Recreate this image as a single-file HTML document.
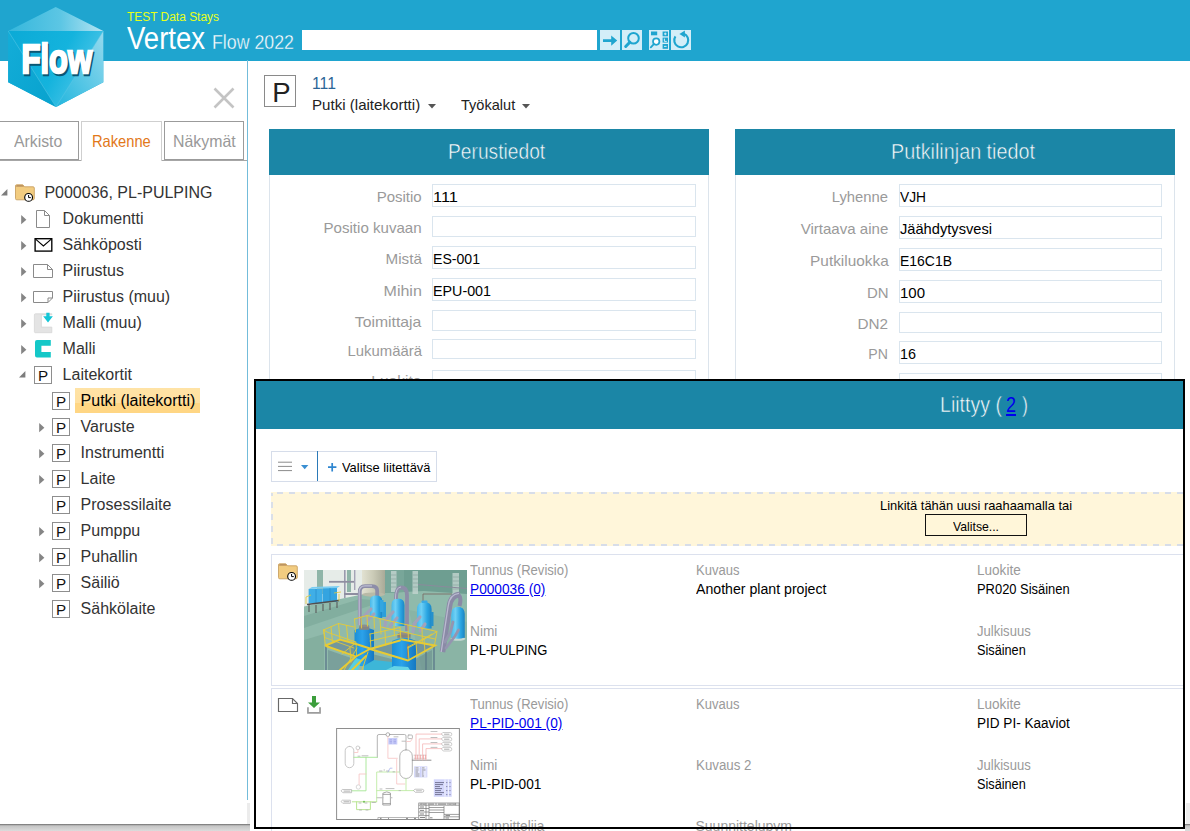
<!DOCTYPE html>
<html lang="fi"><head><meta charset="utf-8"><title>Vertex Flow 2022</title>
<style>
html,body{margin:0;padding:0;background:#fff;}
body{width:1190px;height:831px;position:relative;overflow:hidden;font-family:"Liberation Sans",sans-serif;}
.t{position:absolute;white-space:nowrap;line-height:1;display:inline-block;}
.ic{position:absolute;display:block;overflow:visible;}
.abs{position:absolute;}
#hdr{position:absolute;left:0;top:0;width:1190px;height:61px;background:#1FA5CF;}
.hbtn{position:absolute;top:30px;width:20px;height:20px;background:#D3EEF8;}
.tab{position:absolute;top:121px;height:39px;box-sizing:border-box;border:1px solid #9b9b9b;background:#fff;}
.tab.act{border-color:#cfcfcf;border-bottom:none;height:40px;}
.pbox{position:absolute;width:16px;height:16px;border:1px solid #8e8e8e;background:#fff;}
.sel{position:absolute;background:linear-gradient(#FFE3A6 0,#FFE0A0 58%,#FFD684 62%,#FFD684 100%);}
.phead{position:absolute;top:129px;height:46px;background:#1B86A6;}
.pbody{position:absolute;top:175px;height:300px;box-sizing:border-box;border:1px solid #DCE4EC;border-top:none;background:#fff;}
.inp{position:absolute;border:1px solid #DAE5EE;background:#fff;}
#ov{position:absolute;left:254px;top:379px;width:927px;height:450px;border:2px solid #000;border-bottom:none;background:#fff;overflow:hidden;}
.card{position:absolute;left:15px;width:1400px;border:1px solid #DCE1EE;background:#fff;box-sizing:border-box;}
</style></head><body>
<div id="hdr"></div>
<!-- search -->
<div class="abs" style="left:302px;top:30px;width:295px;height:20px;background:#fff"></div>
<div class="hbtn" style="left:600px"><svg width="20" height="20" viewBox="0 0 20 20"><path d="M3 9.2H11.2V5.4L17.2 10.6L11.2 15.8V12.1H3Z" fill="#1FA5CF"/></svg></div>
<div class="hbtn" style="left:622px"><svg width="20" height="20" viewBox="0 0 20 20"><circle cx="11.5" cy="8.2" r="5.3" fill="none" stroke="#1FA5CF" stroke-width="2"/><path d="M7.8 12.2L3.7 16.5" stroke="#1FA5CF" stroke-width="3" stroke-linecap="round"/></svg></div>
<div class="hbtn" style="left:649px"><svg width="20" height="20" viewBox="0 0 20 20"><rect x="2" y="1.5" width="6.2" height="3.8" fill="#1FA5CF"/><circle cx="7.2" cy="11.6" r="3.2" fill="#fff" stroke="#1FA5CF" stroke-width="1.7"/><path d="M4.8 14.2L1.8 17.4" stroke="#1FA5CF" stroke-width="1.8" stroke-linecap="round"/><rect x="13.6" y="1.5" width="5.4" height="4.8" fill="#1FA5CF"/><rect x="13.6" y="7.6" width="5.4" height="5" fill="#1FA5CF"/><rect x="13.6" y="14" width="5.4" height="4.8" fill="#1FA5CF"/><path d="M15 3.9H17.6M16.3 2.6V5.2M15.4 8.6V11.4H17.8M15 16.4H17.6" stroke="#D3EEF8" stroke-width="1" fill="none"/></svg></div>
<div class="hbtn" style="left:671px"><svg width="20" height="20" viewBox="0 0 20 20"><path d="M4.4 6.4A7 7 0 1 0 12.8 3.7" fill="none" stroke="#1FA5CF" stroke-width="2.1"/><path d="M13.9 0.5L8.4 4L13.9 7.6Z" fill="#1FA5CF"/></svg></div>
<!-- logo -->
<svg class="ic" style="left:0;top:0" width="120" height="115" viewBox="0 0 120 115">
<defs>
<linearGradient id="gt" x1="0" y1="0" x2="1" y2="0"><stop offset="0" stop-color="#35B7DC"/><stop offset="0.55" stop-color="#5CC6E4"/><stop offset="1" stop-color="#B5E4F2"/></linearGradient>
<linearGradient id="gm" x1="0" y1="0" x2="1" y2="0.4"><stop offset="0" stop-color="#0BAAD6"/><stop offset="0.6" stop-color="#14B3DD"/><stop offset="1" stop-color="#4EC6E8"/></linearGradient>
<linearGradient id="gr" x1="0" y1="1" x2="1" y2="0"><stop offset="0" stop-color="#22B6DE"/><stop offset="1" stop-color="#96DAEE"/></linearGradient>
<linearGradient id="gl" x1="0" y1="0" x2="1" y2="1"><stop offset="0" stop-color="#14ADD8"/><stop offset="1" stop-color="#07A2CE"/></linearGradient>
</defs>
<polygon points="55.7,7 103.3,31 103.3,82.3 56,107 8.2,82.3 8.2,31" fill="#19ABD5"/>
<polygon points="55.7,7 103.3,31 8.2,31" fill="url(#gt)"/>
<polygon points="8.2,31 103.3,31 56,107" fill="url(#gm)"/>
<polygon points="8.2,31 56,107 8.2,82.3" fill="url(#gl)"/>
<polygon points="103.3,31 103.3,82.3 56,107" fill="url(#gr)"/>
<path d="M8.2 31L56 107L103.3 31" fill="none" stroke="#6FD0EA" stroke-width="0.5" opacity="0.8"/>
<text x="22.9" y="74.5" font-family="Liberation Sans, sans-serif" font-weight="bold" font-size="41" textLength="70.5" lengthAdjust="spacingAndGlyphs" fill="#0A5673" stroke="#0A5673" stroke-width="2.4" stroke-linejoin="miter">Flow</text>
<text x="21.5" y="73" font-family="Liberation Sans, sans-serif" font-weight="bold" font-size="41" textLength="70.5" lengthAdjust="spacingAndGlyphs" fill="#fff" stroke="#fff" stroke-width="2.4" stroke-linejoin="miter">Flow</text>
</svg>
<!-- left panel -->
<svg class="ic" style="left:213px;top:87px" width="22" height="22" viewBox="0 0 22 22"><path d="M1.5 1.5L20.5 20.5M20.5 1.5L1.5 20.5" stroke="#c4c4c4" stroke-width="2.6"/></svg>
<div class="abs" style="left:0;top:160px;width:247px;height:1px;background:#a6a6a6"></div>
<div class="tab" style="left:-4px;width:83px"></div>
<div class="tab act" style="left:81px;width:81px"></div>
<div class="tab" style="left:164px;width:80px"></div>
<div class="abs" style="left:247px;top:60px;width:1px;height:740px;background:#73BCDA"></div>
<div class="abs" style="left:247px;top:803px;width:3px;height:21px;background:#ececec"></div>
<div class="abs" style="left:0;top:824px;width:250px;height:7px;background:linear-gradient(#7a7a7a 0,#8a8a8a 12%,#c4c4c4 25%,#dcdcdc 100%)"></div>
<div class="abs" style="left:1186px;top:803px;width:4px;height:21px;background:#ececec"></div>
<div class="abs" style="left:1185px;top:824px;width:5px;height:7px;background:linear-gradient(#7a7a7a 0,#8a8a8a 12%,#c4c4c4 25%,#dcdcdc 100%)"></div>
<svg class="ic" style="left:0.9px;top:189.4px" width="7" height="7" viewBox="0 0 7 7"><path d="M6.4 0V6.4H0Z" fill="#7c7c7c"/></svg>
<svg class="ic" style="left:15px;top:183.5px" width="21" height="18" viewBox="0 0 21 18"><path d="M1.5 0.8H7.8L9.6 2.8H18Q19.3 2.8 19.3 4V14.5Q19.3 15.8 18 15.8H1.8Q0.5 15.8 0.5 14.5V2Q0.5 0.8 1.5 0.8Z" fill="#F2CC80" stroke="#C9A163" stroke-width="0.9"/><path d="M1.6 0.9H7.6L9.2 2.7H1Z" fill="#BE9560"/><circle cx="13.6" cy="13.4" r="3.9" fill="#fff" stroke="#000" stroke-width="1.1"/><path d="M13.6 11V13.6H15.8" fill="none" stroke="#000" stroke-width="1"/></svg>
<svg class="ic" style="left:21px;top:215.0px" width="6" height="10" viewBox="0 0 6 10"><path d="M0.2 0.1L5.4 4.7L0.2 9.3Z" fill="#858585"/></svg>
<svg class="ic" style="left:35px;top:209px" width="16" height="20" viewBox="0 0 16 20"><path d="M1.5 1.5H9.5L14.5 6.5V18.5H1.5Z" fill="#fff" stroke="#8a8a8a"/><path d="M9.5 1.5V6.5H14.5" fill="none" stroke="#8a8a8a"/></svg>
<svg class="ic" style="left:21px;top:241.0px" width="6" height="10" viewBox="0 0 6 10"><path d="M0.2 0.1L5.4 4.7L0.2 9.3Z" fill="#858585"/></svg>
<svg class="ic" style="left:33.5px;top:237.3px" width="20" height="16" viewBox="0 0 20 16"><rect x="1.1" y="1.7" width="16.7" height="12.4" fill="#fff" stroke="#000" stroke-width="1.35"/><path d="M1.6 2.2L9.4 9L17.3 2.2" fill="none" stroke="#000" stroke-width="1.1"/></svg>
<svg class="ic" style="left:21px;top:267.0px" width="6" height="10" viewBox="0 0 6 10"><path d="M0.2 0.1L5.4 4.7L0.2 9.3Z" fill="#858585"/></svg>
<svg class="ic" style="left:32px;top:263px" width="22" height="16" viewBox="0 0 22 16"><path d="M1.5 1.5H15.5L20.5 6.5V14.5H1.5Z" fill="#fff" stroke="#8a8a8a"/><path d="M15.5 1.5V6.5H20.5" fill="none" stroke="#8a8a8a"/></svg>
<svg class="ic" style="left:21px;top:293.0px" width="6" height="10" viewBox="0 0 6 10"><path d="M0.2 0.1L5.4 4.7L0.2 9.3Z" fill="#858585"/></svg>
<svg class="ic" style="left:32px;top:289.4px" width="22" height="16" viewBox="0 0 22 16"><path d="M1.5 2.5H20.5V9L16 13.5H1.5Z" fill="#fff" stroke="#8a8a8a"/><path d="M20.5 9H16V13.5" fill="none" stroke="#8a8a8a"/></svg>
<svg class="ic" style="left:21px;top:319.0px" width="6" height="10" viewBox="0 0 6 10"><path d="M0.2 0.1L5.4 4.7L0.2 9.3Z" fill="#858585"/></svg>
<svg class="ic" style="left:33px;top:309.5px" width="22" height="24" viewBox="0 0 22 24"><path d="M2.4 3.8H18.8V4.8H8.4V17.1H18.8V22.7H2.4Q1.4 22.7 1.4 21.7V4.8Q1.4 3.8 2.4 3.8Z" fill="#e4e4e4" stroke="#d6d6d6" stroke-width="0.8"/><path d="M13.3 2.8H16.6V6.3H19.9L15 12.5L10.2 6.3H13.3Z" fill="#14C6D6"/></svg>
<svg class="ic" style="left:21px;top:345.0px" width="6" height="10" viewBox="0 0 6 10"><path d="M0.2 0.1L5.4 4.7L0.2 9.3Z" fill="#858585"/></svg>
<svg class="ic" style="left:33px;top:339.3px" width="20" height="20" viewBox="0 0 20 20"><path d="M4 1H17.8V6.8H8.4V13H17.8V18.6H4Q2 18.6 2 16.6V3Q2 1 4 1Z" fill="#14C8C8"/></svg>
<svg class="ic" style="left:18.900000000000002px;top:371.4px" width="7" height="7" viewBox="0 0 7 7"><path d="M6.4 0V6.4H0Z" fill="#7c7c7c"/></svg>
<div class="pbox" style="left:34px;top:366.4px"></div>
<div class="sel" style="left:75px;top:388px;width:125px;height:24.5px"></div>
<div class="pbox" style="left:52px;top:392.4px"></div>
<svg class="ic" style="left:39px;top:423.0px" width="6" height="10" viewBox="0 0 6 10"><path d="M0.2 0.1L5.4 4.7L0.2 9.3Z" fill="#858585"/></svg>
<div class="pbox" style="left:52px;top:418.4px"></div>
<svg class="ic" style="left:39px;top:449.0px" width="6" height="10" viewBox="0 0 6 10"><path d="M0.2 0.1L5.4 4.7L0.2 9.3Z" fill="#858585"/></svg>
<div class="pbox" style="left:52px;top:444.4px"></div>
<svg class="ic" style="left:39px;top:475.0px" width="6" height="10" viewBox="0 0 6 10"><path d="M0.2 0.1L5.4 4.7L0.2 9.3Z" fill="#858585"/></svg>
<div class="pbox" style="left:52px;top:470.4px"></div>
<div class="pbox" style="left:52px;top:496.4px"></div>
<svg class="ic" style="left:39px;top:527.0px" width="6" height="10" viewBox="0 0 6 10"><path d="M0.2 0.1L5.4 4.7L0.2 9.3Z" fill="#858585"/></svg>
<div class="pbox" style="left:52px;top:522.4px"></div>
<svg class="ic" style="left:39px;top:553.0px" width="6" height="10" viewBox="0 0 6 10"><path d="M0.2 0.1L5.4 4.7L0.2 9.3Z" fill="#858585"/></svg>
<div class="pbox" style="left:52px;top:548.4px"></div>
<svg class="ic" style="left:39px;top:579.0px" width="6" height="10" viewBox="0 0 6 10"><path d="M0.2 0.1L5.4 4.7L0.2 9.3Z" fill="#858585"/></svg>
<div class="pbox" style="left:52px;top:574.4px"></div>
<div class="pbox" style="left:52px;top:600.4px"></div>
<!-- main -->
<div class="abs" style="left:264px;top:75px;width:30px;height:30px;border:1px solid #8a8a8a;background:#fff"></div>
<svg class="ic" style="left:428px;top:104px" width="8" height="5" viewBox="0 0 8 5"><path d="M0 0H8L4 4.6Z" fill="#555"/></svg>
<svg class="ic" style="left:522px;top:104px" width="8" height="5" viewBox="0 0 8 5"><path d="M0 0H8L4 4.6Z" fill="#555"/></svg>
<div class="pbody" style="left:269px;width:440px"></div>
<div class="phead" style="left:269px;width:440px"></div>
<div class="pbody" style="left:735px;width:440px"></div>
<div class="phead" style="left:735px;width:440px"></div>
<div class="inp" style="left:432px;top:184.1px;width:262px;height:20.7px"></div>
<div class="inp" style="left:432px;top:216.3px;width:262px;height:18.3px"></div>
<div class="inp" style="left:432px;top:246.3px;width:262px;height:20.7px"></div>
<div class="inp" style="left:432px;top:278.1px;width:262px;height:20.7px"></div>
<div class="inp" style="left:432px;top:310.3px;width:262px;height:18.3px"></div>
<div class="inp" style="left:432px;top:339.2px;width:262px;height:18.3px"></div>
<div class="inp" style="left:432px;top:369.5px;width:262px;height:18.3px"></div>
<div class="inp" style="left:899px;top:184.1px;width:261px;height:20.7px"></div>
<div class="inp" style="left:899px;top:216.3px;width:261px;height:20.7px"></div>
<div class="inp" style="left:899px;top:248.3px;width:261px;height:20.7px"></div>
<div class="inp" style="left:899px;top:280.2px;width:261px;height:20.7px"></div>
<div class="inp" style="left:899px;top:312.3px;width:261px;height:18.3px"></div>
<div class="inp" style="left:899px;top:341.2px;width:261px;height:20.7px"></div>
<div class="inp" style="left:899px;top:373px;width:261px;height:18.3px"></div>
<span class="t" style="left:127.00px;top:10.60px;font-size:12.5px;color:#E8FF1A;transform:scaleX(0.9549);transform-origin:0 0;">TEST Data Stays</span>
<span class="t" style="left:127.00px;top:23.70px;font-size:30.8px;color:#fff;transform:scaleX(0.8933);transform-origin:0 0;">Vertex</span>
<span class="t" style="left:211.60px;top:32.70px;font-size:19.6px;color:#fff;transform:scaleX(0.9059);transform-origin:0 0;-webkit-text-stroke:0.35px #1FA5CF;">Flow 2022</span>
<span class="t" style="left:14.40px;top:132.50px;font-size:16.5px;color:#999;transform:scaleX(0.9576);transform-origin:0 0;">Arkisto</span>
<span class="t" style="left:92.00px;top:132.50px;font-size:16.5px;color:#E2781A;transform:scaleX(0.8901);transform-origin:0 0;">Rakenne</span>
<span class="t" style="left:173.30px;top:132.50px;font-size:16.5px;color:#999;transform:scaleX(0.9630);transform-origin:0 0;">Näkymät</span>
<span class="t" style="left:44.40px;top:184.80px;font-size:16px;color:#333;">P000036, PL-PULPING</span>
<span class="t" style="left:62.60px;top:210.80px;font-size:16px;color:#333;">Dokumentti</span>
<span class="t" style="left:62.60px;top:236.80px;font-size:16px;color:#333;">Sähköposti</span>
<span class="t" style="left:62.60px;top:262.80px;font-size:16px;color:#333;">Piirustus</span>
<span class="t" style="left:62.60px;top:288.80px;font-size:16px;color:#333;">Piirustus (muu)</span>
<span class="t" style="left:62.60px;top:314.80px;font-size:16px;color:#333;">Malli (muu)</span>
<span class="t" style="left:62.60px;top:340.80px;font-size:16px;color:#333;">Malli</span>
<span class="t" style="left:62.60px;top:366.80px;font-size:16px;color:#333;">Laitekortit</span>
<span class="t" style="left:38.00px;top:367.80px;font-size:15.2px;color:#111;">P</span>
<span class="t" style="left:80.60px;top:392.80px;font-size:16px;color:#000;">Putki (laitekortti)</span>
<span class="t" style="left:56.00px;top:393.80px;font-size:15.2px;color:#111;">P</span>
<span class="t" style="left:80.60px;top:418.80px;font-size:16px;color:#333;">Varuste</span>
<span class="t" style="left:56.00px;top:419.80px;font-size:15.2px;color:#111;">P</span>
<span class="t" style="left:80.60px;top:444.80px;font-size:16px;color:#333;">Instrumentti</span>
<span class="t" style="left:56.00px;top:445.80px;font-size:15.2px;color:#111;">P</span>
<span class="t" style="left:80.60px;top:470.80px;font-size:16px;color:#333;">Laite</span>
<span class="t" style="left:56.00px;top:471.80px;font-size:15.2px;color:#111;">P</span>
<span class="t" style="left:80.60px;top:496.80px;font-size:16px;color:#333;">Prosessilaite</span>
<span class="t" style="left:56.00px;top:497.80px;font-size:15.2px;color:#111;">P</span>
<span class="t" style="left:80.60px;top:522.80px;font-size:16px;color:#333;">Pumppu</span>
<span class="t" style="left:56.00px;top:523.80px;font-size:15.2px;color:#111;">P</span>
<span class="t" style="left:80.60px;top:548.80px;font-size:16px;color:#333;">Puhallin</span>
<span class="t" style="left:56.00px;top:549.80px;font-size:15.2px;color:#111;">P</span>
<span class="t" style="left:80.60px;top:574.80px;font-size:16px;color:#333;">Säiliö</span>
<span class="t" style="left:56.00px;top:575.80px;font-size:15.2px;color:#111;">P</span>
<span class="t" style="left:80.60px;top:600.80px;font-size:16px;color:#333;">Sähkölaite</span>
<span class="t" style="left:56.00px;top:601.80px;font-size:15.2px;color:#111;">P</span>
<span class="t" style="left:272.20px;top:78.60px;font-size:27.5px;color:#222;">P</span>
<span class="t" style="left:311.80px;top:75.60px;font-size:16px;color:#2C6597;transform:scaleX(0.9824);transform-origin:0 0;">111</span>
<span class="t" style="left:311.80px;top:97.40px;font-size:15px;color:#222;transform:scaleX(1.0062);transform-origin:0 0;">Putki (laitekortti)</span>
<span class="t" style="left:460.50px;top:97.40px;font-size:15px;color:#222;transform:scaleX(0.9700);transform-origin:0 0;">Työkalut</span>
<span class="t" style="left:448.00px;top:141.70px;font-size:21.4px;color:#fff;transform:scaleX(0.8982);transform-origin:0 0;-webkit-text-stroke:0.55px #1B86A6;">Perustiedot</span>
<span class="t" style="left:891.00px;top:141.70px;font-size:21.4px;color:#fff;transform:scaleX(0.9244);transform-origin:0 0;-webkit-text-stroke:0.55px #1B86A6;">Putkilinjan tiedot</span>
<span class="t" style="left:376.67px;top:188.50px;font-size:15px;color:#9a9a9a;">Positio</span>
<span class="t" style="left:433.00px;top:188.50px;font-size:15px;color:#000;transform:scaleX(1.0959);transform-origin:0 0;">111</span>
<span class="t" style="left:324.14px;top:219.60px;font-size:15px;color:#9a9a9a;transform:scaleX(1.0045);transform-origin:100% 0;">Positio kuvaan</span>
<span class="t" style="left:385.86px;top:250.70px;font-size:15px;color:#9a9a9a;transform:scaleX(1.0127);transform-origin:100% 0;">Mistä</span>
<span class="t" style="left:433.00px;top:250.70px;font-size:15px;color:#000;transform:scaleX(0.9391);transform-origin:0 0;">ES-001</span>
<span class="t" style="left:385.84px;top:282.50px;font-size:15px;color:#9a9a9a;transform:scaleX(1.0681);transform-origin:100% 0;">Mihin</span>
<span class="t" style="left:433.00px;top:282.50px;font-size:15px;color:#000;transform:scaleX(0.9528);transform-origin:0 0;">EPU-001</span>
<span class="t" style="left:358.34px;top:313.60px;font-size:15px;color:#9a9a9a;transform:scaleX(1.0496);transform-origin:100% 0;">Toimittaja</span>
<span class="t" style="left:346.65px;top:342.50px;font-size:15px;color:#9a9a9a;transform:scaleX(0.9927);transform-origin:100% 0;">Lukumäärä</span>
<span class="t" style="left:373.32px;top:372.80px;font-size:15px;color:#9a9a9a;transform:scaleX(1.0336);transform-origin:100% 0;">Luokite</span>
<span class="t" style="left:831.30px;top:188.50px;font-size:15px;color:#9a9a9a;transform:scaleX(0.9877);transform-origin:100% 0;">Lyhenne</span>
<span class="t" style="left:900.00px;top:188.50px;font-size:15px;color:#000;transform:scaleX(0.9173);transform-origin:0 0;">VJH</span>
<span class="t" style="left:801.00px;top:220.70px;font-size:15px;color:#9a9a9a;transform:scaleX(1.0035);transform-origin:100% 0;">Virtaava aine</span>
<span class="t" style="left:900.00px;top:220.70px;font-size:15px;color:#000;transform:scaleX(0.9765);transform-origin:0 0;">Jäähdytysvesi</span>
<span class="t" style="left:811.58px;top:252.70px;font-size:15px;color:#9a9a9a;transform:scaleX(1.0245);transform-origin:100% 0;">Putkiluokka</span>
<span class="t" style="left:900.00px;top:252.70px;font-size:15px;color:#000;transform:scaleX(0.9306);transform-origin:0 0;">E16C1B</span>
<span class="t" style="left:866.63px;top:284.60px;font-size:15px;color:#9a9a9a;transform:scaleX(0.9967);transform-origin:100% 0;">DN</span>
<span class="t" style="left:900.00px;top:284.60px;font-size:15px;color:#000;">100</span>
<span class="t" style="left:858.28px;top:315.60px;font-size:15px;color:#9a9a9a;transform:scaleX(1.0195);transform-origin:100% 0;">DN2</span>
<span class="t" style="left:867.46px;top:345.60px;font-size:15px;color:#9a9a9a;transform:scaleX(0.9403);transform-origin:100% 0;">PN</span>
<span class="t" style="left:900.00px;top:345.60px;font-size:15px;color:#000;transform:scaleX(0.9588);transform-origin:0 0;">16</span>
<!-- overlay -->
<div id="ov">
<div class="abs" style="left:0;top:0;width:1460px;height:48px;background:#1B86A6"></div>
<div class="abs" style="left:14.5px;top:70px;width:164px;height:28.5px;border:1px solid #D6DDEA;background:#fff"></div>
<div class="abs" style="left:60.6px;top:70px;width:1.2px;height:30px;background:#2B7AB8"></div>
<svg class="ic" style="left:22px;top:80px" width="16" height="12" viewBox="0 0 16 12"><path d="M0 1.2H14M0 5.4H14M0 9.6H14" stroke="#8c8c8c" stroke-width="1"/></svg>
<svg class="ic" style="left:44.8px;top:84.2px" width="8" height="5" viewBox="0 0 8 5"><path d="M0 0H7.4L3.7 4.2Z" fill="#3A8FD2"/></svg>
<svg class="ic" style="left:71.6px;top:82.2px" width="9" height="9" viewBox="0 0 9 9"><path d="M4.2 0V8.4M0 4.2H8.4" stroke="#2F86D0" stroke-width="1.7"/></svg>
<svg class="ic" style="left:15px;top:111px" width="1400" height="54" viewBox="0 0 1400 54"><rect x="0" y="0" width="1400" height="54" fill="#FFF6DA"/><rect x="1" y="1" width="1398" height="52" fill="none" stroke="#D7DDE9" stroke-width="1.8" stroke-dasharray="6 6" stroke-dashoffset="-5"/></svg>
<div class="abs" style="left:669px;top:133px;width:100px;height:19.6px;border:1px solid #111;background:#FFF6D9"></div>
<div class="card" style="top:173px;height:132px"></div>
<div class="card" style="top:307px;height:200px"></div>
<svg class="ic" style="left:22px;top:182px" width="21" height="18" viewBox="0 0 21 18"><path d="M1.5 0.8H7.8L9.6 2.8H18Q19.3 2.8 19.3 4V14.5Q19.3 15.8 18 15.8H1.8Q0.5 15.8 0.5 14.5V2Q0.5 0.8 1.5 0.8Z" fill="#F2CC80" stroke="#C9A163" stroke-width="0.9"/><path d="M1.6 0.9H7.6L9.2 2.7H1Z" fill="#BE9560"/><circle cx="13.6" cy="13.4" r="3.9" fill="#fff" stroke="#000" stroke-width="1.1"/><path d="M13.6 11V13.6H15.8" fill="none" stroke="#000" stroke-width="1"/></svg>
<svg class="ic" style="left:48px;top:189px" width="163" height="100" viewBox="0 0 163 100">
<defs>
<linearGradient id="tk" x1="0" y1="0" x2="1" y2="0"><stop offset="0" stop-color="#49B9EA"/><stop offset="0.3" stop-color="#6FD0F5"/><stop offset="0.7" stop-color="#2AA5E2"/><stop offset="1" stop-color="#1C86C4"/></linearGradient>
<linearGradient id="tf" x1="0" y1="0" x2="1" y2="0"><stop offset="0" stop-color="#1A8FD8"/><stop offset="0.4" stop-color="#2BA2EA"/><stop offset="1" stop-color="#1578C2"/></linearGradient>
<linearGradient id="cy" x1="0" y1="0" x2="1" y2="0"><stop offset="0" stop-color="#E2E2D2"/><stop offset="0.5" stop-color="#CACAB6"/><stop offset="1" stop-color="#A9AA98"/></linearGradient>
<linearGradient id="pp" x1="0" y1="0" x2="1" y2="0"><stop offset="0" stop-color="#B9B9CF"/><stop offset="1" stop-color="#8B8BA6"/></linearGradient>
<clipPath id="c1"><rect width="163" height="100"/></clipPath>
</defs>
<g clip-path="url(#c1)">
<rect width="163" height="100" fill="#90BAAB"/>
<!-- floor shading bands -->
<polygon points="0,46 56,29 80,31 0,58" fill="#82AE9F"/>
<polygon points="0,70 20,64 20,100 0,100" fill="#84AF9F"/>
<polygon points="105,40 163,52 163,100 118,100" fill="#8AB4A5"/>
<!-- back wall right -->
<polygon points="80,0 163,0 163,24 120,21 80,23" fill="#6E9E91"/>
<polygon points="80,0 100,0 100,22 80,23" fill="#78A699"/>
<rect x="87" y="1" width="5.5" height="21" fill="#C3D5D0" opacity="0.8"/>
<rect x="108.5" y="1" width="5.5" height="23" fill="#C3D5D0" opacity="0.8"/>
<rect x="148.5" y="3" width="6.5" height="22" fill="#C3D5D0" opacity="0.8"/>
<path d="M87 5h5.5M87 9h5.5M87 13h5.5M87 17h5.5M108.5 5h5.5M108.5 9h5.5M108.5 13h5.5M108.5 17h5.5M148.5 7h6.5M148.5 11h6.5M148.5 15h6.5M148.5 19h6.5" stroke="#8FA9A3" stroke-width="0.8"/>
<path d="M114 14.5L163 18.5" stroke="#8A8A9C" stroke-width="1.2"/>
<path d="M119 33V24H148" fill="none" stroke="#7A6E68" stroke-width="0.9"/>
<!-- left wall -->
<polygon points="0,0 58,0 58,24.5 0,36.5" fill="#E6ECE8"/>
<rect x="13" y="0" width="6" height="24" fill="#8FB5A8"/>
<rect x="43" y="0" width="4" height="22" fill="#8FB5A8"/>
<rect x="40" y="0" width="1.6" height="28" fill="#9A9AAE"/>
<rect x="50" y="0" width="1.4" height="20" fill="#A4A4B6"/>
<path d="M25 11.8H50" stroke="#8E8EA0" stroke-width="1.8"/>
<path d="M40 24H56" stroke="#8E8EA0" stroke-width="2"/>
<!-- beige cylinder -->
<rect x="58" y="0" width="23" height="24.5" fill="url(#cy)"/>
<ellipse cx="69.5" cy="24.5" rx="11.5" ry="2" fill="#B9BAA7"/>
<!-- small blue tanks -->
<rect x="4.6" y="19" width="14" height="14.5" fill="#3FAEE6"/>
<rect x="19" y="18" width="14" height="14" fill="#34A4E0"/>
<polygon points="4.6,19 8,17 36,16 33,18" fill="#79CDF2"/>
<path d="M12 19V33M26 18V32" stroke="#2A8FCC" stroke-width="0.8"/>
<path d="M5 34V42M12 35V43M19 34V41M26 33V40M33 32V38" stroke="#5A5A5A" stroke-width="1.1"/>
<path d="M3 34.5L35 30.5" stroke="#4F4F4F" stroke-width="1.4"/>
<path d="M2 27L2 34M2 27L7 25M35 24V31M30 23L37 22" stroke="#E3C93A" stroke-width="0.8" fill="none"/>
<!-- pipe 1 -->
<path d="M55.8 55V22Q55.8 16.2 61 16.2H68Q73.2 16.2 73.2 21V27" fill="none" stroke="#8D8DA8" stroke-width="3.8"/>
<path d="M55.2 55V22Q55.2 15.8 61 15.8H68" fill="none" stroke="#BDBDD2" stroke-width="1.2"/>
<!-- tank 1 -->
<path d="M66 31Q66 25.5 72 25.5Q78.2 25.5 78.2 31V48H66Z" fill="url(#tk)"/>
<rect x="78" y="32" width="4" height="15" fill="#2C9FDB"/>
<path d="M67 39L60 46M70 44L63 51" stroke="#A2A2BA" stroke-width="3.1" stroke-linecap="round"/>
<!-- tank 2 -->
<path d="M87.5 35Q87.5 28.5 94 28.5Q100.5 28.5 100.5 35V56H87.5Z" fill="url(#tk)"/>
<path d="M92 29Q92 17.5 97 17.5Q103 17.5 103 25V61" fill="none" stroke="#8D8DA8" stroke-width="3.8"/>
<path d="M91.4 29Q91.4 17 97 17" fill="none" stroke="#BDBDD2" stroke-width="1"/>
<path d="M89 42L82 50L81 56M93 48L86 56" stroke="#A2A2BA" stroke-width="3.1" stroke-linecap="round" fill="none"/>
<rect x="76" y="30" width="3.5" height="12" fill="#34A6E0"/>
<!-- tank 3 -->
<path d="M113 39Q113 32 120.3 32Q127.6 32 127.6 39V58.5H113Z" fill="url(#tk)"/>
<rect x="117.5" y="30.5" width="6" height="2.5" rx="1" fill="#3AAAE4"/>
<path d="M116 47L110 54L109 62M121 54L116 61" stroke="#A2A2BA" stroke-width="3.1" stroke-linecap="round" fill="none"/>
<rect x="127" y="42" width="2.5" height="14" fill="#2590CC"/>
<!-- tank 4 -->
<path d="M147.5 44Q147.5 37 154 37Q160.5 37 160.5 44V68Q154 71 147.5 68Z" fill="url(#tk)"/>
<ellipse cx="154" cy="68.8" rx="7.5" ry="2" fill="#C5D8D2"/>
<path d="M147.5 44Q147.5 37 154 37Q160.5 37 160.5 44V67.5Q154 70 147.5 67.5Z" fill="url(#tk)"/>
<!-- pipe 3 big -->
<path d="M138.5 82L145.5 36Q147 25 156 24.5" fill="none" stroke="#8A8AA6" stroke-width="5.6"/>
<path d="M137.2 82L144.2 36Q145.6 24.4 155 23.4" fill="none" stroke="#BABAD0" stroke-width="1.3"/>
<path d="M155 25Q157.5 29 155.5 36" fill="none" stroke="#8A8AA6" stroke-width="4"/>
<path d="M141 72L146.5 62L149 52M142 78L151 66L154.5 60" stroke="#9595B0" stroke-width="2.8" stroke-linecap="round" fill="none"/>
<!-- platform steel -->
<path d="M22 76V100M53 86V100M130 76V100M122 82V100" stroke="#5E7B8C" stroke-width="1.4"/>
<polygon points="22,76 36,69 66,78 50,87" fill="#6F9099" opacity="0.85"/>
<polygon points="24,80 50,89 50,100 24,100" fill="#5F8088" opacity="0.45"/>
<polygon points="66,80 96,70 130,76 104,90" fill="#6F9099" opacity="0.85"/>
<polygon points="68,84 104,93 128,80 128,100 68,100" fill="#5F8088" opacity="0.45"/>
<!-- front tanks -->
<path d="M50.5 60Q60 55 70 60V96H50.5Z" fill="url(#tf)"/>
<ellipse cx="60.2" cy="56.8" rx="5.2" ry="2.4" fill="#8E8E8E"/>
<rect x="55.2" y="56.8" width="10" height="3" fill="#858585"/>
<path d="M88 71Q100 64 112 71V100H88Z" fill="url(#tf)"/>
<ellipse cx="100" cy="64.6" rx="6.6" ry="2.6" fill="#959087"/>
<rect x="93.4" y="64.6" width="13.2" height="3.2" fill="#8A857D"/>
<rect x="103" y="74" width="1.6" height="14" fill="#8A7A74"/>
<polygon points="60,96 70,90 88,92 88,100 60,100" fill="#3DB6D8"/>
<polygon points="44,100 52,88 58,90 54,100" fill="#55CFE2"/>
<polygon points="82,100 90,96 104,97 106,100" fill="#66D4E6"/>
<!-- yellow rails -->
<g stroke="#E7CB34" fill="none" stroke-linecap="round">
<path d="M21.5 75.5L36 69.5L52 74L66 78.5M52 86.5L66 79L96 70.5M66 79L104 90.5M104 90.5L131 75.5L98 69.5M22 76L52 86.5L36 100M62 86L48 100" stroke-width="1.9"/>
<path d="M19.5 60L34.5 53.5L50 57M19.5 60L21.5 75.5M34.5 53.5L36 69.5M27 56.8L28.5 72.5M42.5 55.4L44 71.5M19.5 60L24 62.5L52 72" stroke-width="0.9"/>
<path d="M50.5 49L63 45.5L76 48.5M50.5 49L51.5 62M63 45.5L63.5 56M76 48.5L77 64M57 47L57.6 58M70 47L70.4 58" stroke-width="0.9"/>
<path d="M77 49L133 61.5L130.5 75M77 57L131 69M90 52L90.4 66M104 55L104.4 70M118 58L118.4 73M133 61.5L126 66L104 78" stroke-width="0.9"/>
<path d="M66 64L67 79M66 64L96 57.5M66 71L96 64M96 57.5L97 70M81 60.5L81.6 75" stroke-width="0.9"/>
<path d="M104 77L105 90M104 77L128 64M112 73L113 86M120 68.5L121 82" stroke-width="0.9"/>
<path d="M38 84L52 72.5L52.5 86M46 78L47 92M40 100L53 78M58 100L64 82" stroke-width="0.9"/>
<path d="M20 60.5L21 68M22 68L50 78" stroke-width="0.8"/>
</g>
</g>
</svg>

<svg class="ic" style="left:21px;top:316px" width="22" height="16" viewBox="0 0 22 16"><path d="M1.5 1.5H15.5L20.5 6.5V14.5H1.5Z" fill="#fff" stroke="#686868" stroke-width="1.15"/><path d="M15.5 1.5V6.5H20.5" fill="none" stroke="#686868" stroke-width="1.15"/></svg><svg class="ic" style="left:51px;top:314px" width="14" height="20" viewBox="0 0 14 20"><path d="M5 1H9V7.5H13L7 13L1 7.5H5Z" fill="#3C9E3C"/><path d="M0.95 12.2V17.85H13.05V12.2" fill="none" stroke="#9c9c9c" stroke-width="1.7"/></svg>
<svg class="ic" style="left:80px;top:347px" width="124" height="92" viewBox="0 0 124 92">
<rect x="0.6" y="0.5" width="122.8" height="91" fill="#fff" stroke="#8e8e8e" stroke-width="1"/>
<g fill="none" stroke-linecap="round" stroke-linejoin="round" opacity="0.8">
<!-- vessels -->
<rect x="9.2" y="18.4" width="8.6" height="21.3" rx="4.3" stroke="#a9a9a9" stroke-width="0.8" fill="#fff"/>
<rect x="63.8" y="21.8" width="12.5" height="28.7" rx="6.2" stroke="#9a9a9a" stroke-width="0.9" fill="#fff"/>
<path d="M47.2 65Q50.8 62.6 54.4 65V77H47.2ZM47.2 66.4H54.4M47.2 75.6H54.4" stroke="#777" stroke-width="0.8"/>
<path d="M40.7 69.7H47M54.6 69.7H56" stroke="#aaa" stroke-width="1.1"/>
<!-- grey piping -->
<path d="M41.3 29.3V8Q41.3 6.5 43 6.5H50M54 6.5H68.5Q70 6.5 70 8V21.8" stroke="#8c8c8c" stroke-width="0.8"/>
<circle cx="51.9" cy="6.6" r="1.9" stroke="#777" stroke-width="0.7" fill="#fff"/>
<rect x="72" y="7" width="4.4" height="3.6" rx="0.8" stroke="#888" stroke-width="0.7"/>
<circle cx="21.9" cy="19.9" r="1.9" stroke="#aaa" stroke-width="0.7"/>
<circle cx="22.4" cy="59" r="2.2" stroke="#bbb" stroke-width="0.7"/>
<path d="M76.3 32.2H95" stroke="#666" stroke-width="0.9"/>
<path d="M78 27.2H90M78 30.3H90" stroke="#aaa" stroke-width="0.6"/>
<!-- green lines -->
<path d="M17.8 29.3H41.3M30 29.3V62.8H15.6" stroke="#8EE27A" stroke-width="0.9"/>
<path d="M40.7 73.4V44H63.4M40.7 62.6H77.6M70 50.5V62.6" stroke="#B0E890" stroke-width="0.9"/>
<path d="M16.3 73.8H40.7M20.6 74V81.6H34.4V74" stroke="#9FDC6A" stroke-width="0.9"/>
<circle cx="28" cy="73.8" r="1" fill="#4DB030" stroke="none"/>
<!-- red lines -->
<path d="M51.9 8.6V30.3H61.3M60.7 31.5V56H68.8M30 46H23.1V56.6M21.9 21.8V24.5H18.5M76.4 10.6L74.5 13.5H70.5" stroke="#F6B4B4" stroke-width="0.8"/>
<path d="M80 32V6.1H105.6M83.2 32V10.9H105.6M86.6 32V15.9H105.6M90 32V20.6H105.6" stroke="#F4A6A6" stroke-width="0.8"/>
<path d="M79.3 27.2V31M81.6 27.2V31M84.6 27.2V31M87.4 27.2V31M89.6 27.2V31" stroke="#E88" stroke-width="0.8"/>
<!-- flags -->
<path d="M107.2 4.5H114Q115.8 4.5 115.8 6.2Q115.8 8 114 8H107.2L105.7 6.2ZM107.2 9.4H114Q115.8 9.4 115.8 11.2Q115.8 13 114 13H107.2L105.7 11.2ZM107.2 14.4H114Q115.8 14.4 115.8 16.2Q115.8 18 114 18H107.2L105.7 16.2ZM107.2 19.4H114Q115.8 19.4 115.8 21.2Q115.8 23 114 23H107.2L105.7 21.2Z" stroke="#a8a8a8" stroke-width="0.7"/>
<path d="M108.5 6.2H113M108.5 11.2H113M108.5 16.2H113M108.5 21.2H113" stroke="#999" stroke-width="1"/>
<path d="M6.8 61.5H15.6V64.7H6.8L5.3 63.1ZM6.8 72.2H14.4V75.3H6.8L5.3 73.8Z" stroke="#999" stroke-width="0.7"/>
<path d="M8 63.1H14M8 73.8H13" stroke="#999" stroke-width="1"/>
<path d="M79.3 61.2H86Q87.8 61.2 87.8 62.8Q87.8 64.3 86 64.3H79.3L77.8 62.8Z" stroke="#999" stroke-width="0.7"/>
<path d="M80.5 62.8H85.5" stroke="#aaa" stroke-width="1"/>
<!-- small labels / valves -->
<path d="M22 28.2H24M26 27.8H32M58 8.8H62M66 13.2H69.5M43.5 43H46M48 42H48.6M50.5 43H53M57 43.8H58.5M44 61H46M50 60.6H58M63 62.6H64.5M23 75H25M29 75H31M36 74.5H39.5M23.5 82H25.5M30 82H32M95 3.4H101M95 9.5H101M95 14.5H101M95 19.4H101" stroke="#9a9a9a" stroke-width="0.8"/>
<path d="M52 44L54 40.2H56" stroke="#8C9AE8" stroke-width="0.7"/>
</g>
<!-- blue tables -->
<rect x="52.3" y="10" width="9" height="6.5" fill="#C9CDF9"/>
<path d="M53.5 11.8H56M57.5 11.8H60M53.5 13.4H56M57.5 13.4H60M53.5 15H56M57.5 15H60" stroke="#8F96E0" stroke-width="0.6"/>
<rect x="78.2" y="38.4" width="13.1" height="11" fill="#CDD1FA"/>
<path d="M79 39.9H84M85.5 39.9H90.5M79 42H84M85.5 42H90.5M79 44H84M85.5 44H90.5M79 46H84M85.5 46H90.5M79 48H84M85.5 48H90.5" stroke="#fff" stroke-width="1.2"/>
<path d="M79.4 39.9H82.5M86 39.9H88.5M79.4 42H82.5M86 42H89.5M79.4 44H82M86 44H87.5M79.4 46H83.5M86 46H87.5M79.4 48H83.5M86 48H88" stroke="#777" stroke-width="0.7"/>
<rect x="97.8" y="51.3" width="17.9" height="17.5" fill="#D3D6FB"/>
<path d="M99 54.6H108M99 56.6H107M99 58.6H104M99 60.6H106M99 62.6H105M99 64.6H108M99 66.6H106" stroke="#5a5a7a" stroke-width="0.8"/>
<path d="M109 51.5V68.6M112.4 51.5V68.6" stroke="#fff" stroke-width="0.7"/>
<path d="M110 54.6H111.4M113.4 54.6H114.6M110 58.6H111.4M113.4 58.6H114.6M110 62.6H111.4M113.4 62.6H114.6M110 66.6H111.4M113.4 66.6H114.6" stroke="#7a7a9a" stroke-width="0.8"/>
<!-- title block -->
<g fill="none" stroke="#777" stroke-width="0.7">
<rect x="82.8" y="75" width="40.4" height="16.3"/>
<path d="M82.8 77.2H123.2M82.8 80.5H93M82.8 84H93M82.8 87.6H93M90 75V91.3M93 77.2V91.3M108 78V91.3M93 79.5H108M93 82H108M93 84.5H108M108 86.4H123.2M108 88.8H123.2M100 75V77.2M112 75V77.2M116 75V77.2M119.6 75V77.2M86 75V77.2"/>
<path d="M41.9 89.5H82.8M41.9 89.5V91.3" stroke="#999"/>
</g>
<path d="M84 76.1H85.5M87 76.1H89.5M92 76.1H98M102 76.1H110M113 76.1H115M117 76.1H119M84 79H88M84 82.4H88M84 86H88M84 89.5H89M94 89.8H96.5M109.5 87.6H114M109.5 90H113M44 90.4H45.5M52 90.4H53M70 90.4H72M78 90.4H80" stroke="#777" stroke-width="0.9" fill="none"/>
</svg>

<span class="t" style="left:683.50px;top:13.50px;font-size:21.4px;color:#fff;transform:scaleX(0.9151);transform-origin:0 0;-webkit-text-stroke:0.55px #1B86A6;">Liittyy (</span>
<span class="t" style="left:750.00px;top:13.50px;font-size:21.4px;color:#0000EE;transform:scaleX(0.8399);transform-origin:0 0;text-decoration:underline;">2</span>
<span class="t" style="left:765.50px;top:13.50px;font-size:21.4px;color:#fff;transform:scaleX(0.8421);transform-origin:0 0;-webkit-text-stroke:0.55px #1B86A6;">)</span>
<span class="t" style="left:85.60px;top:79.50px;font-size:13px;color:#000;transform:scaleX(0.9893);transform-origin:0 0;">Valitse liitettävä</span>
<span class="t" style="left:624.00px;top:117.50px;font-size:13px;color:#000;transform:scaleX(0.9913);transform-origin:0 0;">Linkitä tähän uusi raahaamalla tai</span>
<span class="t" style="left:697.00px;top:138.50px;font-size:13px;color:#000;transform:scaleX(0.9409);transform-origin:0 0;">Valitse...</span>
<span class="t" style="left:213.60px;top:182.00px;font-size:14px;color:#9a9a9a;transform:scaleX(0.9345);transform-origin:0 0;">Tunnus (Revisio)</span>
<span class="t" style="left:213.60px;top:201.00px;font-size:14px;color:#0000EE;transform:scaleX(0.9784);transform-origin:0 0;text-decoration:underline;">P000036 (0)</span>
<span class="t" style="left:213.60px;top:243.00px;font-size:14px;color:#9a9a9a;transform:scaleX(0.9786);transform-origin:0 0;">Nimi</span>
<span class="t" style="left:213.60px;top:262.00px;font-size:14px;color:#000;transform:scaleX(0.9297);transform-origin:0 0;">PL-PULPING</span>
<span class="t" style="left:439.50px;top:182.00px;font-size:14px;color:#9a9a9a;transform:scaleX(0.9314);transform-origin:0 0;">Kuvaus</span>
<span class="t" style="left:439.50px;top:201.00px;font-size:14px;color:#000;transform:scaleX(1.0100);transform-origin:0 0;">Another plant project</span>
<span class="t" style="left:721.30px;top:182.00px;font-size:14px;color:#9a9a9a;transform:scaleX(0.9678);transform-origin:0 0;">Luokite</span>
<span class="t" style="left:721.30px;top:201.00px;font-size:14px;color:#000;transform:scaleX(0.9232);transform-origin:0 0;">PR020 Sisäinen</span>
<span class="t" style="left:721.30px;top:243.00px;font-size:14px;color:#9a9a9a;transform:scaleX(0.9324);transform-origin:0 0;">Julkisuus</span>
<span class="t" style="left:721.30px;top:262.00px;font-size:14px;color:#000;transform:scaleX(0.9068);transform-origin:0 0;">Sisäinen</span>
<span class="t" style="left:213.60px;top:316.00px;font-size:14px;color:#9a9a9a;transform:scaleX(0.9345);transform-origin:0 0;">Tunnus (Revisio)</span>
<span class="t" style="left:213.60px;top:335.00px;font-size:14px;color:#0000EE;transform:scaleX(0.9813);transform-origin:0 0;text-decoration:underline;">PL-PID-001 (0)</span>
<span class="t" style="left:213.60px;top:377.00px;font-size:14px;color:#9a9a9a;transform:scaleX(0.9786);transform-origin:0 0;">Nimi</span>
<span class="t" style="left:213.60px;top:396.00px;font-size:14px;color:#000;transform:scaleX(0.9760);transform-origin:0 0;">PL-PID-001</span>
<span class="t" style="left:213.60px;top:438.00px;font-size:14px;color:#9a9a9a;transform:scaleX(0.9753);transform-origin:0 0;">Suunnittelija</span>
<span class="t" style="left:439.50px;top:316.00px;font-size:14px;color:#9a9a9a;transform:scaleX(0.9314);transform-origin:0 0;">Kuvaus</span>
<span class="t" style="left:439.50px;top:377.00px;font-size:14px;color:#9a9a9a;transform:scaleX(0.9507);transform-origin:0 0;">Kuvaus 2</span>
<span class="t" style="left:439.50px;top:438.00px;font-size:14px;color:#9a9a9a;">Suunnittelupvm</span>
<span class="t" style="left:721.30px;top:316.00px;font-size:14px;color:#9a9a9a;transform:scaleX(0.9678);transform-origin:0 0;">Luokite</span>
<span class="t" style="left:721.30px;top:335.00px;font-size:14px;color:#000;transform:scaleX(0.9686);transform-origin:0 0;">PID PI- Kaaviot</span>
<span class="t" style="left:721.30px;top:377.00px;font-size:14px;color:#9a9a9a;transform:scaleX(0.9324);transform-origin:0 0;">Julkisuus</span>
<span class="t" style="left:721.30px;top:396.00px;font-size:14px;color:#000;transform:scaleX(0.9068);transform-origin:0 0;">Sisäinen</span>
</div>
<div class="abs" style="left:254px;top:827px;width:931px;height:2px;background:#000"></div>
<div class="abs" style="left:254px;top:829px;width:2px;height:2px;background:#fff"></div>
<div class="abs" style="left:1183px;top:829px;width:2px;height:2px;background:#fff"></div>
</body></html>
